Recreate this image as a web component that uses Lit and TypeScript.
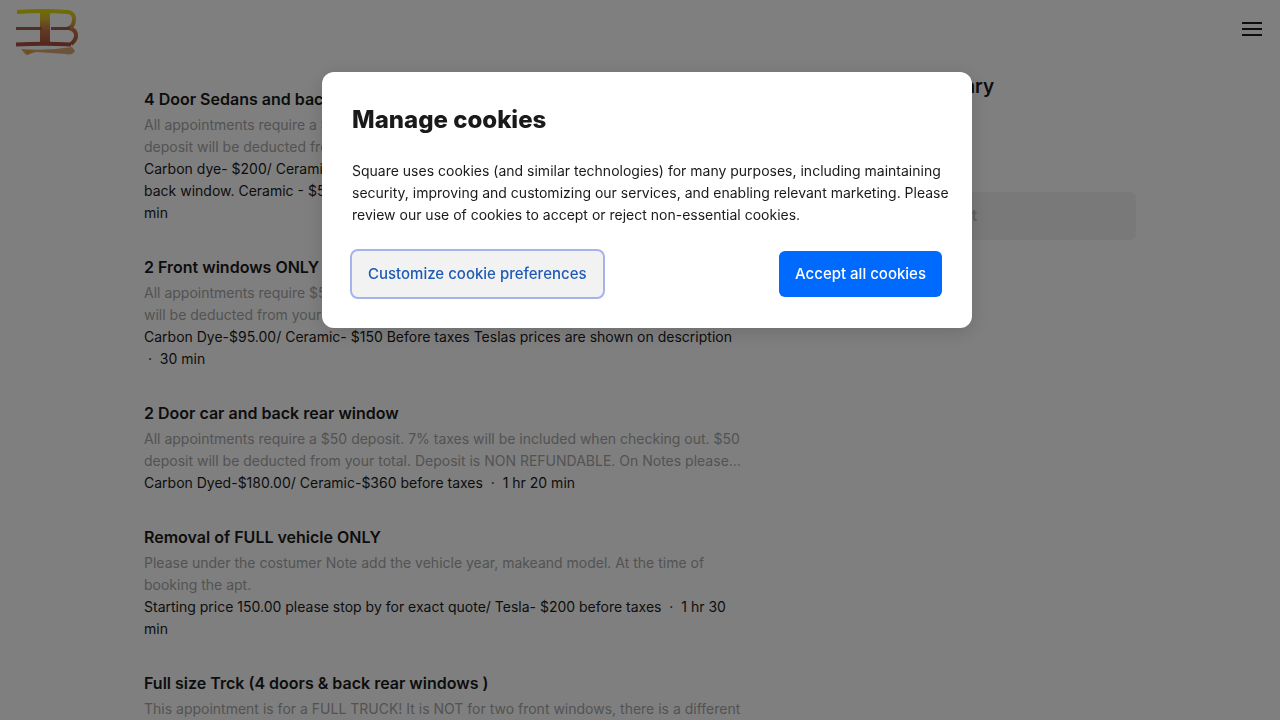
import { LitElement, html, css } from "lit";
import { customElement, property } from "lit/decorators.js";

interface Service {
  name: string;
  description: string;
  price: string;
  duration: string;
}

const services: Service[] = [
  {
    name: "4 Door Sedans and back rear window",
    description:
      "All appointments require a $50 deposit. 7% taxes will be included when checking out. $50 deposit will be deducted from your total. Deposit is NON REFUNDABLE. On Notes please add the vehicle year, make and model.",
    price:
      "Carbon dye- $200/ Ceramic - $400 before taxes. Teslas with one piece glass roof and back window. Ceramic - $550 and Carbon - $350 for the vehicles before taxes",
    duration: "2 hr 30 min",
  },
  {
    name: "2 Front windows ONLY",
    description:
      "All appointments require $50 deposit. 7% taxes will be included when checking out. $50 will be deducted from your total. Deposit is NON REFUNDABLE. On Notes please add the vehicle year, make and model.",
    price: "Carbon Dye-$95.00/ Ceramic- $150 Before taxes Teslas prices are shown on description",
    duration: "30 min",
  },
  {
    name: "2 Door car and back rear window",
    description:
      "All appointments require a $50 deposit. 7% taxes will be included when checking out. $50 deposit will be deducted from your total. Deposit is NON REFUNDABLE. On Notes please add the vehicle year, make and model.",
    price: "Carbon Dyed-$180.00/ Ceramic-$360 before taxes",
    duration: "1 hr 20 min",
  },
  {
    name: "Removal of FULL vehicle ONLY",
    description:
      "Please under the costumer Note add the vehicle year, makeand model. At the time of booking the apt.",
    price: "Starting price 150.00 please stop by for exact quote/ Tesla- $200 before taxes",
    duration: "1 hr 30 min",
  },
  {
    name: "Full size Trck (4 doors & back rear windows )",
    description:
      "This appointment is for a FULL TRUCK! It is NOT for two front windows, there is a different appointment for that service.",
    price: "Carbon Dyed-$220.00/ Ceramic-$420 before taxes",
    duration: "2 hr",
  },
];

@customElement("site-header")
class SiteHeader extends LitElement {
  static styles = css`
    :host {
      display: flex;
      align-items: center;
      justify-content: space-between;
      height: 58px;
      padding: 0 16px 0 14px;
      background: #fff;
    }
    .logo,
    .menu svg {
      display: block;
    }
    .menu {
      padding: 0;
      border: 0;
      background: none;
      color: #1a1a1a;
    }
  `;

  render() {
    return html`
      <a href="#" aria-label="Home">
        <svg class="logo" width="66" height="54" viewBox="0 0 66 54" fill="none">
          <defs>
            <linearGradient id="gold" gradientUnits="userSpaceOnUse" x1="0" y1="7" x2="0" y2="44">
              <stop offset="0" stop-color="#dfe000" />
              <stop offset="0.25" stop-color="#dcc030" />
              <stop offset="0.55" stop-color="#c47848" />
              <stop offset="1" stop-color="#a85038" />
            </linearGradient>
          </defs>
          <path d="M7 47Q34 49 58 45L61 49Q58 54 52 52L22 50L12 53Z" fill="#d8a878" />
          <path d="M11 48H19L14 53Z" fill="#dca030" />
          <path d="M26 11H36V43H26Z" fill="url(#gold)" />
          <path
            d="M3 10Q30 8 54 10Q60 11 60 17Q60 24 55 26Q63 28 62 35Q61 39 57 42"
            stroke="url(#gold)"
            stroke-width="4"
          />
          <path d="M2 26.500H28M37 26.500H56" stroke="#a06048" stroke-width="3" />
          <path d="M2 42.500Q30 41 57 42.500" stroke="#a85040" stroke-width="4" />
        </svg>
      </a>
      <button class="menu" aria-label="Menu">
        <svg width="24" height="24" viewBox="0 0 24 24" stroke="currentColor" stroke-width="2">
          <path d="M2 6H22M2 12H22M2 18H22" />
        </svg>
      </button>
    `;
  }
}

@customElement("service-item")
class ServiceItem extends LitElement {
  @property({ attribute: false }) service!: Service;

  static styles = css`
    :host {
      display: block;
    }
    .name {
      margin: 0 0 4px;
      font-size: 16px;
      line-height: 22px;
      font-weight: 600;
    }
    .description,
    .meta {
      margin: 0;
      font-size: 14px;
      line-height: 22px;
    }
    .description {
      display: -webkit-box;
      -webkit-box-orient: vertical;
      -webkit-line-clamp: 2;
      overflow: hidden;
      color: #a6a6a6;
    }
  `;

  render() {
    const s = this.service;
    return html`
      <h3 class="name">${s.name}</h3>
      <p class="description">${s.description}</p>
      <p class="meta">${s.price} &nbsp;·&nbsp;&nbsp;${s.duration}</p>
    `;
  }
}

@customElement("cookie-dialog")
class CookieDialog extends LitElement {
  static styles = css`
    :host {
      position: fixed;
      inset: 0;
      display: flex;
      justify-content: center;
      align-items: flex-start;
      padding: 72px 0 0 14px;
      background: rgba(0, 0, 0, 0.5);
    }
    .dialog {
      box-sizing: border-box;
      width: 650px;
      max-width: 100%;
      padding: 30px 16px 31px 30px;
      border-radius: 12px;
      background: #fff;
      box-shadow: 0 4px 20px rgba(0, 0, 0, 0.15);
    }
    .title {
      margin: 0 0 22px;
      font-size: 24px;
      line-height: 36px;
      font-weight: 800;
    }
    .text {
      margin: 0 0 25px;
      font-size: 14px;
      line-height: 22px;
    }
    .actions {
      display: flex;
      justify-content: space-between;
      padding-right: 14px;
    }
    .button {
      height: 46px;
      padding: 0 16px;
      border: 0;
      border-radius: 6px;
      font: 500 15px/22px Inter, sans-serif;
    }
    .secondary {
      background: #f2f2f2;
      color: #1f5bb5;
      outline: 2px solid #a5b2ec;
    }
    .primary {
      background: #006aff;
      color: #fff;
    }
  `;

  render() {
    return html`
      <section class="dialog" role="dialog" aria-modal="true" aria-labelledby="title">
        <h2 class="title" id="title">Manage cookies</h2>
        <p class="text">
          Square uses cookies (and similar technologies) for many purposes, including maintaining
          security, improving and customizing our services, and enabling relevant marketing. Please
          review our use of cookies to accept or reject non-essential cookies.
        </p>
        <div class="actions">
          <button class="button secondary">Customize cookie preferences</button>
          <button class="button primary">Accept all cookies</button>
        </div>
      </section>
    `;
  }
}

@customElement("app-root")
class AppRoot extends LitElement {
  static styles = css`
    :host {
      display: block;
      height: 100vh;
      overflow: hidden;
      background: #fff;
      color: #1a1a1a;
      font-family: Inter, sans-serif;
    }
    .page {
      display: grid;
      grid-template-columns: minmax(0, 1fr) 352px;
      gap: 36px;
      max-width: 992px;
      margin: 0 auto;
      padding: 16px 24px 0;
    }
    .services {
      display: flex;
      flex-direction: column;
      gap: 32px;
      padding-top: 14px;
    }
    .heading {
      margin: 0 0 92px;
      font-size: 19px;
      line-height: 26px;
      font-weight: 600;
    }
    .next {
      width: 100%;
      height: 48px;
      border: 0;
      border-radius: 6px;
      background: #f2f2f2;
      color: #bdbdbd;
      font: 600 15px/24px Inter, sans-serif;
    }
  `;

  render() {
    return html`
      <site-header></site-header>
      <main class="page">
        <div class="services">
          ${services.map((s) => html`<service-item .service=${s}></service-item>`)}
        </div>
        <aside>
          <h2 class="heading">Appointment summary</h2>
          <button class="next" disabled>Next</button>
        </aside>
      </main>
      <cookie-dialog></cookie-dialog>
    `;
  }
}
